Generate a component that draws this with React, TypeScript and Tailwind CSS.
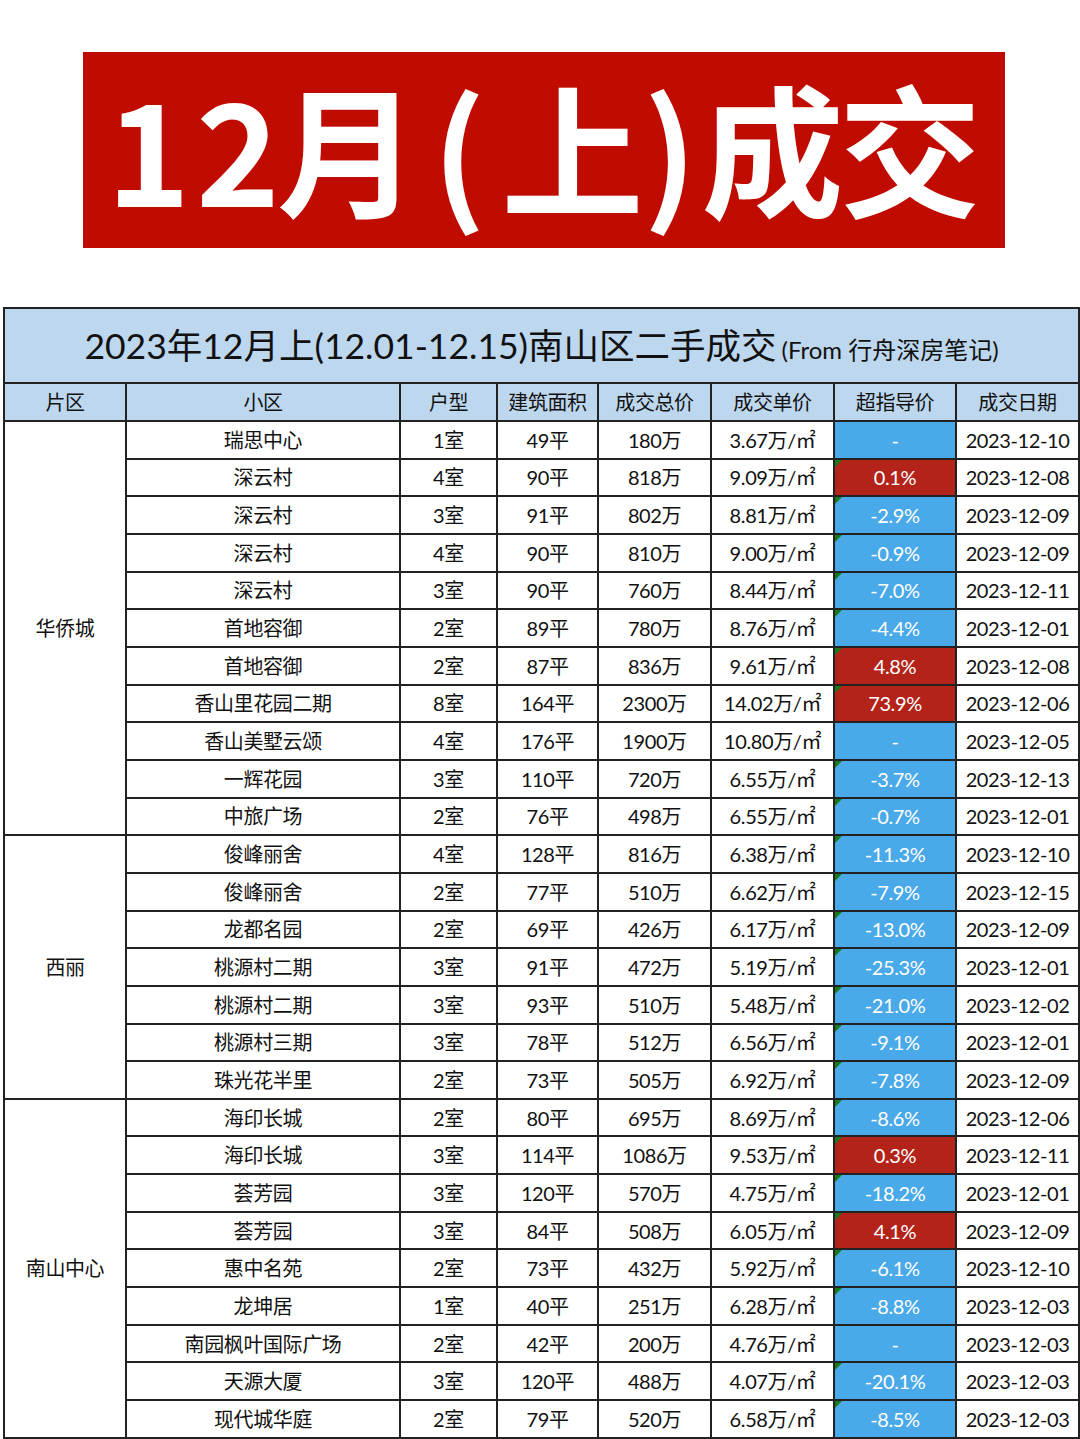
import React from 'react';

type Row = {
  name: string;
  room: string;
  area: string;
  total: string;
  unit: string;
  diff: string;
  date: string;
};

const groups: { zone: string; rows: Row[] }[] = [
  {
    zone: '华侨城',
    rows: [
      { name: '瑞思中心', room: '1室', area: '49平', total: '180万', unit: '3.67万/㎡', diff: '-', date: '2023-12-10' },
      { name: '深云村', room: '4室', area: '90平', total: '818万', unit: '9.09万/㎡', diff: '0.1%', date: '2023-12-08' },
      { name: '深云村', room: '3室', area: '91平', total: '802万', unit: '8.81万/㎡', diff: '-2.9%', date: '2023-12-09' },
      { name: '深云村', room: '4室', area: '90平', total: '810万', unit: '9.00万/㎡', diff: '-0.9%', date: '2023-12-09' },
      { name: '深云村', room: '3室', area: '90平', total: '760万', unit: '8.44万/㎡', diff: '-7.0%', date: '2023-12-11' },
      { name: '首地容御', room: '2室', area: '89平', total: '780万', unit: '8.76万/㎡', diff: '-4.4%', date: '2023-12-01' },
      { name: '首地容御', room: '2室', area: '87平', total: '836万', unit: '9.61万/㎡', diff: '4.8%', date: '2023-12-08' },
      { name: '香山里花园二期', room: '8室', area: '164平', total: '2300万', unit: '14.02万/㎡', diff: '73.9%', date: '2023-12-06' },
      { name: '香山美墅云颂', room: '4室', area: '176平', total: '1900万', unit: '10.80万/㎡', diff: '-', date: '2023-12-05' },
      { name: '一辉花园', room: '3室', area: '110平', total: '720万', unit: '6.55万/㎡', diff: '-3.7%', date: '2023-12-13' },
      { name: '中旅广场', room: '2室', area: '76平', total: '498万', unit: '6.55万/㎡', diff: '-0.7%', date: '2023-12-01' },
    ],
  },
  {
    zone: '西丽',
    rows: [
      { name: '俊峰丽舍', room: '4室', area: '128平', total: '816万', unit: '6.38万/㎡', diff: '-11.3%', date: '2023-12-10' },
      { name: '俊峰丽舍', room: '2室', area: '77平', total: '510万', unit: '6.62万/㎡', diff: '-7.9%', date: '2023-12-15' },
      { name: '龙都名园', room: '2室', area: '69平', total: '426万', unit: '6.17万/㎡', diff: '-13.0%', date: '2023-12-09' },
      { name: '桃源村二期', room: '3室', area: '91平', total: '472万', unit: '5.19万/㎡', diff: '-25.3%', date: '2023-12-01' },
      { name: '桃源村二期', room: '3室', area: '93平', total: '510万', unit: '5.48万/㎡', diff: '-21.0%', date: '2023-12-02' },
      { name: '桃源村三期', room: '3室', area: '78平', total: '512万', unit: '6.56万/㎡', diff: '-9.1%', date: '2023-12-01' },
      { name: '珠光花半里', room: '2室', area: '73平', total: '505万', unit: '6.92万/㎡', diff: '-7.8%', date: '2023-12-09' },
    ],
  },
  {
    zone: '南山中心',
    rows: [
      { name: '海印长城', room: '2室', area: '80平', total: '695万', unit: '8.69万/㎡', diff: '-8.6%', date: '2023-12-06' },
      { name: '海印长城', room: '3室', area: '114平', total: '1086万', unit: '9.53万/㎡', diff: '0.3%', date: '2023-12-11' },
      { name: '荟芳园', room: '3室', area: '120平', total: '570万', unit: '4.75万/㎡', diff: '-18.2%', date: '2023-12-01' },
      { name: '荟芳园', room: '3室', area: '84平', total: '508万', unit: '6.05万/㎡', diff: '4.1%', date: '2023-12-09' },
      { name: '惠中名苑', room: '2室', area: '73平', total: '432万', unit: '5.92万/㎡', diff: '-6.1%', date: '2023-12-10' },
      { name: '龙坤居', room: '1室', area: '40平', total: '251万', unit: '6.28万/㎡', diff: '-8.8%', date: '2023-12-03' },
      { name: '南园枫叶国际广场', room: '2室', area: '42平', total: '200万', unit: '4.76万/㎡', diff: '-', date: '2023-12-03' },
      { name: '天源大厦', room: '3室', area: '120平', total: '488万', unit: '4.07万/㎡', diff: '-20.1%', date: '2023-12-03' },
      { name: '现代城华庭', room: '2室', area: '79平', total: '520万', unit: '6.58万/㎡', diff: '-8.5%', date: '2023-12-03' },
    ],
  },
];

const headers = ['片区', '小区', '户型', '建筑面积', '成交总价', '成交单价', '超指导价', '成交日期'];

// banner glyphs, each in a box so spacing follows the poster
const bannerChars: { ch: string; w: string }[] = [
  { ch: '1', w: 'w-[97px]' },
  { ch: '2', w: 'w-[82px]' },
  { ch: '月', w: 'w-[138px]' },
  { ch: '(', w: 'w-[84px]' },
  { ch: '上', w: 'w-[143px]' },
  { ch: ')', w: 'w-[52px]' },
  { ch: '成', w: 'w-[153px]' },
  { ch: '交', w: 'w-[122px]' },
];

const cell = 'border-2 border-[#222] text-center p-0';

function DiffCell({ diff }: { diff: string }) {
  const up = !diff.startsWith('-');
  const bg = up ? 'bg-[#b3231a]' : 'bg-[#4aa9e8]';
  return (
    <td className={`${cell} ${bg} relative text-white`}>
      {diff !== '-' && (
        <span className="absolute left-0 top-0 w-0 h-0 border-t-[7px] border-t-[#1a7a1a] border-r-[7px] border-r-transparent" />
      )}
      {diff}
    </td>
  );
}

export default function App() {
  return (
    <div
      className="w-[1080px] h-[1439px] bg-white overflow-hidden"
      style={{ fontFamily: 'Lato, "Noto Sans CJK SC", sans-serif' }}
    >
      {/* 标题横幅 */}
      <div className="pt-[52px] pl-[83px]">
        <div className="w-[922px] h-[196px] bg-[#c00b00] flex items-center pl-[17px]">
          <div
            className="flex text-white font-bold text-[142px] leading-none pb-[10px]"
            style={{ fontFamily: '"Noto Sans CJK SC", sans-serif' }}
          >
            {bannerChars.map((c, i) => (
              <span key={i} className={`${c.w} flex justify-center`}>{c.ch}</span>
            ))}
          </div>
        </div>
      </div>

      {/* 成交表格 */}
      <div className="pt-[59px] pl-[3px]">
        <table className="w-[1075px] table-fixed border-collapse border-2 border-[#222] text-[20px] tracking-[-0.4px] text-[#111]">
          <colgroup>
            <col className="w-[122px]" />
            <col className="w-[274px]" />
            <col className="w-[97px]" />
            <col className="w-[101px]" />
            <col className="w-[113px]" />
            <col className="w-[123px]" />
            <col className="w-[122px]" />
            <col className="w-[123px]" />
          </colgroup>
          <tbody>
            <tr className="h-[75px] bg-[#bdd7ee]">
              <td colSpan={8} className={`${cell} tracking-normal`}>
                <span className="text-[35.5px]">2023年12月上(12.01-12.15)南山区二手成交</span>
                <span className="text-[24px] ml-[5px]">(From 行舟深房笔记)</span>
              </td>
            </tr>
            <tr className="h-[38px] bg-[#bdd7ee]">
              {headers.map((h) => (
                <td key={h} className={cell}>{h}</td>
              ))}
            </tr>
            {groups.map((g) =>
              g.rows.map((r, i) => (
                <tr key={g.zone + i} className="h-[37.67px]">
                  {i === 0 && (
                    <td rowSpan={g.rows.length} className={cell}>{g.zone}</td>
                  )}
                  <td className={cell}>{r.name}</td>
                  <td className={cell}>{r.room}</td>
                  <td className={cell}>{r.area}</td>
                  <td className={cell}>{r.total}</td>
                  <td className={cell}>{r.unit}</td>
                  <DiffCell diff={r.diff} />
                  <td className={cell}>{r.date}</td>
                </tr>
              ))
            )}
          </tbody>
        </table>
      </div>
    </div>
  );
}
